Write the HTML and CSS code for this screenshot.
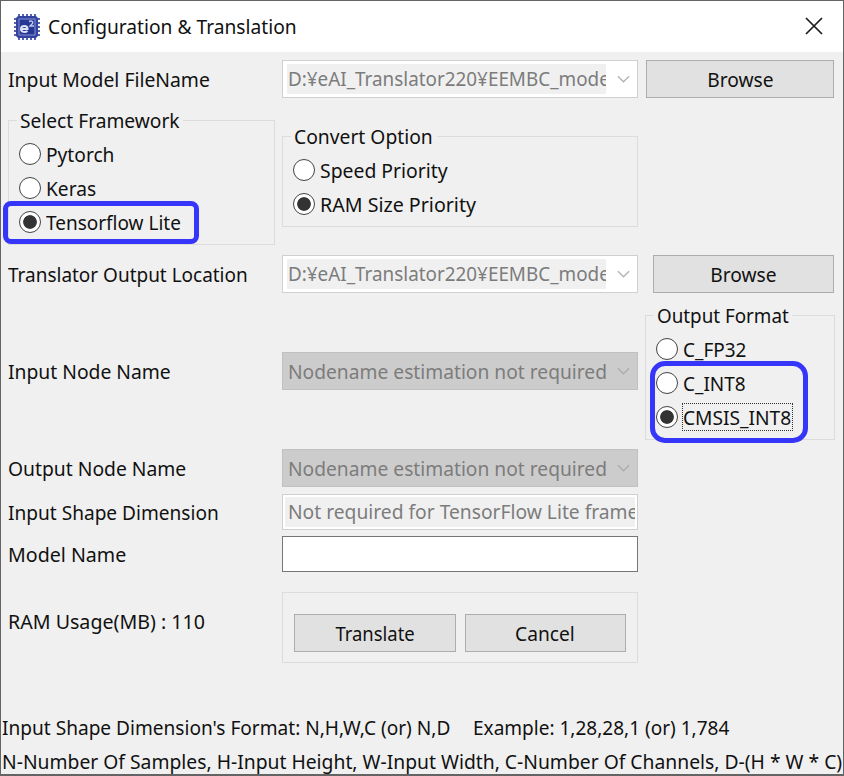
FILE: index.html
```html
<!DOCTYPE html>
<html lang="en">
<head>
<meta charset="utf-8">
<title>Configuration &amp; Translation</title>
<link rel="stylesheet" href="styles.css">
</head>
<body>
<main class="window">
  <header class="titlebar">
    <svg class="chip" viewBox="0 0 28 28">
      <path d="M6 1v26M10 1v26M14 1v26M18 1v26M22 1v26M1 6h26M1 10h26M1 14h26M1 18h26M1 22h26" stroke="#5262b4" stroke-width="2" fill="none"/>
      <path d="M5 3h18l2 2v18l-2 2H5l-2-2V5z" fill="#3343a0"/>
      <rect x="6" y="6" width="16" height="16" fill="#263795" stroke="#8794d2" stroke-width="1"/>
      <path d="M8 16h6.500c0-4-6.500-4-6.500 0 0 3.500 4.500 3.500 6.500 2" stroke="#dce2f8" stroke-width="2" fill="none"/>
      <path d="M16 8.500c3-1.500 5 .5 3 2.500l-2 2h4" stroke="#bdc7ef" stroke-width="1.400" fill="none"/>
    </svg>
    <h1 class="title"><span class="t t-title">Configuration &amp; Translation</span></h1>
    <svg class="close" viewBox="0 0 18 18"><path d="M1 1l16 16M17 1L1 17" stroke="#1c1c1c" stroke-width="1.700" fill="none"/></svg>
  </header>

  <section class="form">
    <div class="row row-model">
      <span class="label"><span class="t t-model">Input Model FileName</span></span>
      <div class="combo"><span class="value"><span class="t t-path">D:¥eAI_Translator220¥EEMBC_mode</span></span><svg class="chevron" viewBox="0 0 14 8"><path d="M1 1l6 6 6-6"/></svg></div>
      <button class="button browse"><span class="t t-browse">Browse</span></button>
    </div>

    <div class="row row-options">
      <fieldset class="group framework">
        <legend><span class="t t-framework">Select Framework</span></legend>
        <div class="radio"><i class="dot"></i><span class="t t-pytorch">Pytorch</span></div>
        <div class="radio"><i class="dot"></i><span class="t t-keras">Keras</span></div>
        <div class="radio"><i class="dot on"></i><span class="t t-lite">Tensorflow Lite</span></div>
        <div class="mark mark-lite"></div>
      </fieldset>
      <fieldset class="group convert">
        <legend><span class="t t-convert">Convert Option</span></legend>
        <div class="radio"><i class="dot"></i><span class="t t-speed">Speed Priority</span></div>
        <div class="radio"><i class="dot on"></i><span class="t t-ram">RAM Size Priority</span></div>
      </fieldset>
    </div>

    <div class="row row-location">
      <span class="label"><span class="t t-location">Translator Output Location</span></span>
      <div class="combo"><span class="value"><span class="t t-path">D:¥eAI_Translator220¥EEMBC_mode</span></span><svg class="chevron" viewBox="0 0 14 8"><path d="M1 1l6 6 6-6"/></svg></div>
      <button class="button narrow"><span class="t t-browse">Browse</span></button>
    </div>

    <div class="row row-input">
      <span class="label"><span class="t t-input">Input Node Name</span></span>
      <div class="combo gray"><span class="value"><span class="t t-node">Nodename estimation not required</span></span><svg class="chevron" viewBox="0 0 14 8"><path d="M1 1l6 6 6-6"/></svg></div>
      <fieldset class="group format">
        <legend><span class="t t-format">Output Format</span></legend>
        <div class="radio"><i class="dot"></i><span class="t t-fp">C_FP32</span></div>
        <div class="radio"><i class="dot"></i><span class="t t-int">C_INT8</span></div>
        <div class="radio"><i class="dot on"></i><span class="focus"><span class="t t-cmsis">CMSIS_INT8</span></span></div>
        <div class="mark mark-int"></div>
      </fieldset>
    </div>

    <div class="row row-output">
      <span class="label"><span class="t t-output">Output Node Name</span></span>
      <div class="combo gray"><span class="value"><span class="t t-node">Nodename estimation not required</span></span><svg class="chevron" viewBox="0 0 14 8"><path d="M1 1l6 6 6-6"/></svg></div>
    </div>

    <div class="row row-shape">
      <span class="label"><span class="t t-shape">Input Shape Dimension</span></span>
      <div class="field disabled"><span class="value"><span class="t t-notreq">Not required for TensorFlow Lite frame</span></span></div>
    </div>

    <div class="row row-name">
      <span class="label"><span class="t t-name">Model Name</span></span>
      <div class="field"></div>
    </div>

    <div class="row row-actions">
      <span class="label usage"><span class="t t-usage">RAM Usage(MB) : 110</span></span>
      <div class="actions">
        <button class="button"><span class="t t-translate">Translate</span></button>
        <button class="button"><span class="t t-cancel">Cancel</span></button>
      </div>
    </div>
  </section>

  <footer class="notes">
    <p><span class="t t-note1">Input Shape Dimension's Format: N,H,W,C (or) N,D</span><span class="t t-example">Example: 1,28,28,1 (or) 1,784</span></p>
    <p><span class="t t-note2">N-Number Of Samples, H-Input Height, W-Input Width, C-Number Of Channels, D-(H * W * C)</span></p>
  </footer>
</main>
</body>
</html>
```
FILE: styles.css
```css
* { box-sizing: border-box; }
body { margin: 0; font: 20.5px/34px "Noto Sans", sans-serif; color: #111; }
p, h1 { margin: 0; font: inherit; }
span { white-space: pre; }
.window { width: 844px; height: 776px; background: #f0f0f0; border: 2px solid #646464; border-width: 1px 1px 2px 1px; overflow: hidden; }
.titlebar { height: 51px; background: #fff; display: flex; align-items: center; padding: 0 20px 0 12px; }
.chip { width: 28px; height: 28px; }
.title { flex: 1; margin: -2px 0 0 7px; }
.close { width: 18px; height: 18px; margin-top: -1px; }
.form { padding: 8px 8px 0 7px; height: 658px; }
.row { display: grid; grid-template-columns: 267px 356px 189px; column-gap: 7px; align-items: center; }
.row-model { height: 38px; }
.row-options { height: 157px; align-items: start; padding-top: 12px; }
.row-location { height: 38px; }
.row-input { height: 156px; }
.row-output { height: 38px; }
.row-shape { height: 36px; margin-top: 7px; }
.row-name { height: 36px; margin-top: 6px; }
.row-actions { height: 71px; margin-top: 20px; }
.combo { height: 38px; border: 1px solid #d0d0d0; background: #fff; display: flex; align-items: center; padding: 3px 7px 3px 4px; color: #7c7c7c; }
.combo .value { width: 319px; height: 30px; line-height: 29px; background: #f0f0f0; overflow: hidden; padding-left: 1px; }
.combo.gray { background: #ccc; border-color: #c0c0c0; }
.combo.gray .value { background: #ccc; width: 322px; line-height: 31px; }
.chevron { width: 13px; height: 8px; margin-left: auto; fill: none; stroke: #b4b4b4; stroke-width: 1.5; }
.gray .chevron { stroke: #adadad; }
.field { height: 36px; border: 1px solid #767676; background: #fff; }
.disabled { border-color: #d0d0d0; padding: 2px; color: #7c7c7c; }
.disabled .value { display: block; height: 30px; line-height: 29px; background: #f0f0f0; overflow: hidden; padding-left: 3px; }
.button { height: 38px; width: 100%; margin: 0; padding: 0; border: 1px solid #adadad; background: #e1e1e1; font: inherit; color: #111; line-height: 34px; border-radius: 0; }
.browse { width: 188px; margin-left: 1px; }
.narrow { width: 181px; margin-left: 8px; }
.group { position: relative; margin: 0; min-width: 0; border: 1px solid #dcdcdc; padding: 0 0 0 10px; }
.group legend { padding: 0 3px; margin-left: -2px; height: 34px; line-height: 34px; }
.radio { display: flex; align-items: center; height: 34px; gap: 5px; }
.dot { width: 22px; height: 22px; border: 1.5px solid #444; border-radius: 50%; background: #fff; flex: none; }
.on { background: radial-gradient(circle, #333 6.4px, #fff 7.2px); }
.framework { height: 142px; margin-top: -7px; }
.convert { height: 108px; margin-top: 9px; }
.format { height: 142px; width: 190px; align-self: start; margin-top: 5px; }
.focus { outline: 1px dotted #333; width: 109px; height: 26px; line-height: 26px; }
.mark { position: absolute; border: 5px solid #3636fb; }
.mark-lite { left: -6px; top: 64px; width: 196px; height: 43px; border-radius: 8px; }
.mark-int { left: 4px; top: 29px; width: 158px; height: 82px; border-radius: 15px; }
.usage { margin-top: -14px; }
.actions { height: 71px; border: 1px solid #dcdcdc; display: flex; gap: 9px; padding: 21px 11px 0; }
.actions .button { width: 162px; }
.notes { padding-left: 1px; }
.notes p { height: 34px; display: flex; }

/* Condensed lettering, tuned per string */
.t { display: inline-block; transform: scaleX(.935); transform-origin: 0 50%; }
.button .t { transform-origin: 50% 50%; }
.label .t { margin-top: -1px; }
.t-title { transform: scaleX(.936); }
.t-model { transform: scaleX(.943); }
.t-path { transform: scaleX(.92); }
.t-node { transform: scaleX(.937); }
.t-notreq { transform: scaleX(.938); }
.t-framework { margin-right: -11px; }
.t-convert { transform: scaleX(.94); margin-right: -8px; }
.t-format { transform: scaleX(.917); margin-right: -12px; }
.t-lite { transform: scaleX(.926); }
.t-speed { transform: scaleX(.945); }
.t-ram { transform: scaleX(.957); }
.t-location { transform: scaleX(.925); }
.t-fp, .t-int { transform: scaleX(.925); }
.t-shape { transform: scaleX(.931); }
.t-output, .t-input { transform: scaleX(.941); }
.t-name, .t-usage { transform: scaleX(.957); }
.t-translate { transform: scaleX(.9); }
.t-note1 { transform: scaleX(.931); }
.t-example { transform: scaleX(.928); margin-left: -11px; }
.t-note2 { transform: scaleX(.9415); }
```
